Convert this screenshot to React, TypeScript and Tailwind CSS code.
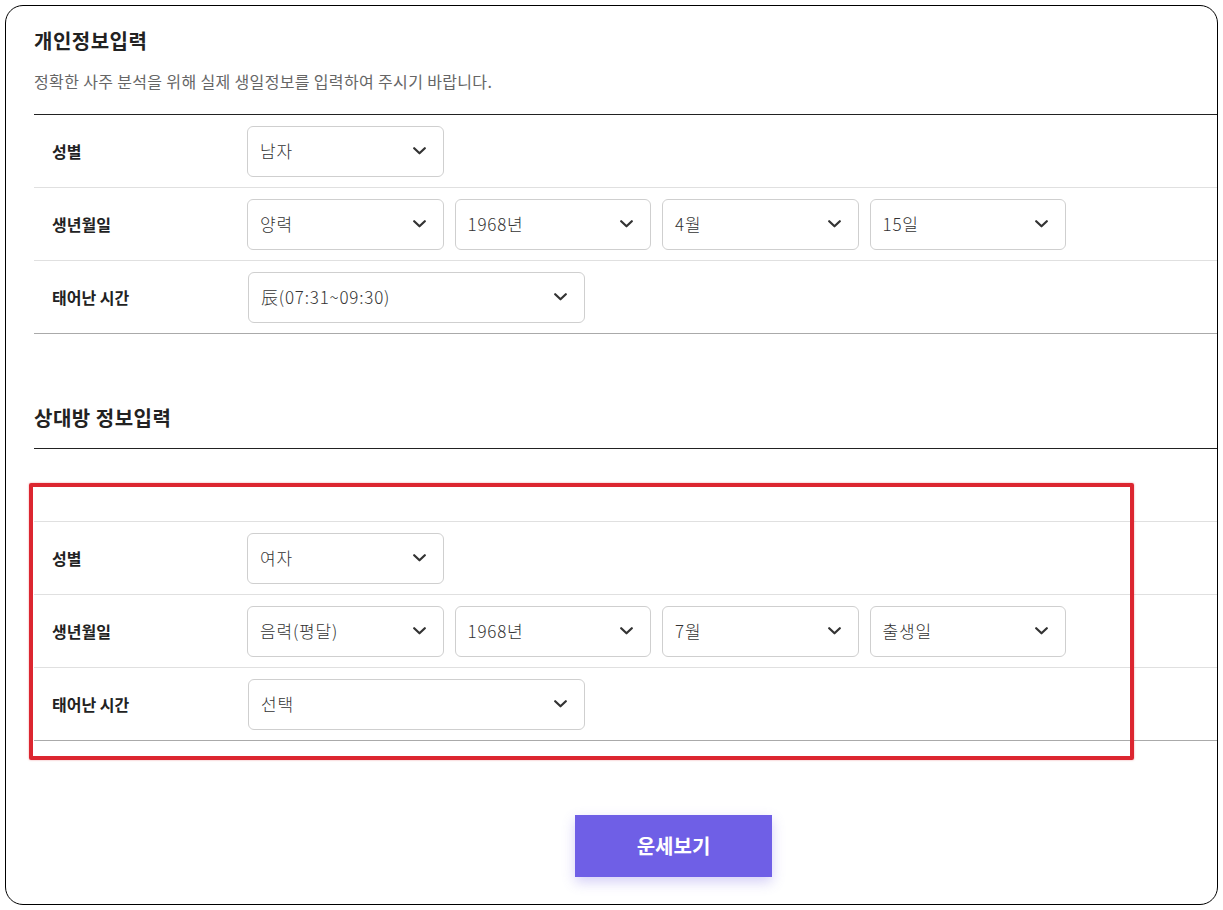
import React from "react";

const FONT = '"Noto Sans CJK KR", "Noto Sans", sans-serif';

function Chevron() {
  return (
    <svg width="13" height="8" viewBox="0 0 13 8" fill="none" className="shrink-0">
      <path d="M1.2 1.2 6.5 6.3 11.8 1.2" stroke="#333" strokeWidth="2.2" strokeLinecap="round" strokeLinejoin="round" />
    </svg>
  );
}

function Select({ value, wide }: { value: string; wide?: boolean }) {
  return (
    <div
      className={`${wide ? "w-[337px] ml-[1px]" : "w-[196.5px]"} h-[51px] flex items-center justify-between pl-[12px] pr-[17px] border border-[#cfcfcf] rounded-[6px] bg-white text-[17px] tracking-[0.8px] text-[#333]`}
    >
      <span className="font-light">{value}</span>
      <Chevron />
    </div>
  );
}

function Row({ label, children, last }: { label: string; children?: React.ReactNode; last?: boolean }) {
  return (
    <div className={`h-[73px] flex items-center border-b ${last ? "border-[#aaaaaa]" : "border-[#e0e0e0]"}`}>
      <div className="w-[213px] pl-[18px] text-[16px] font-bold text-[#222]">{label}</div>
      <div className="flex items-center gap-[11px]">{children}</div>
    </div>
  );
}

export default function App() {
  return (
    <div className="w-[1223px] h-[910px] bg-white p-[5px]" style={{ fontFamily: FONT }}>
      <div className="relative w-[1213px] h-[900px] border border-black rounded-[18px] overflow-hidden bg-white">
        <div className="w-[1307px] pl-[28px] pt-[21px]">
          {/* 개인정보 */}
          <h2 className="text-[20px] leading-[28px] tracking-[0.5px] font-bold text-[#222]">개인정보입력</h2>
          <p className="mt-[15px] text-[16px] leading-[22px] tracking-[0.35px] text-[#666]">
            정확한 사주 분석을 위해 실제 생일정보를 입력하여 주시기 바랍니다.
          </p>
          <div className="mt-[22px] border-t border-[#222]">
            <Row label="성별">
              <Select value="남자" />
            </Row>
            <Row label="생년월일">
              <Select value="양력" />
              <Select value="1968년" />
              <Select value="4월" />
              <Select value="15일" />
            </Row>
            <Row label="태어난 시간" last>
              <Select value="辰(07:31~09:30)" wide />
            </Row>
          </div>

          {/* 상대방 */}
          <h2 className="mt-[70px] text-[20px] leading-[28px] tracking-[0.5px] font-bold text-[#222]">상대방 정보입력</h2>
          <div className="mt-[16px] border-t border-[#222]">
            <div className="h-[73px] border-b border-[#e0e0e0]" />
            <Row label="성별">
              <Select value="여자" />
            </Row>
            <Row label="생년월일">
              <Select value="음력(평달)" />
              <Select value="1968년" />
              <Select value="7월" />
              <Select value="출생일" />
            </Row>
            <Row label="태어난 시간" last>
              <Select value="선택" wide />
            </Row>
          </div>

          <div className="mt-[74px] flex justify-center">
            <button className="w-[197px] h-[62px] bg-[#6f5fe6] text-white text-[20px] font-bold shadow-[0_5px_12px_rgba(111,95,230,0.3)]">
              운세보기
            </button>
          </div>
        </div>

        {/* annotation */}
        <div className="absolute left-[23px] top-[477px] w-[1105px] h-[277px] border-4 border-[#dc2630] rounded-[2px] shadow-[0_0_2px_rgba(220,38,48,0.5)] pointer-events-none" />
      </div>
    </div>
  );
}
